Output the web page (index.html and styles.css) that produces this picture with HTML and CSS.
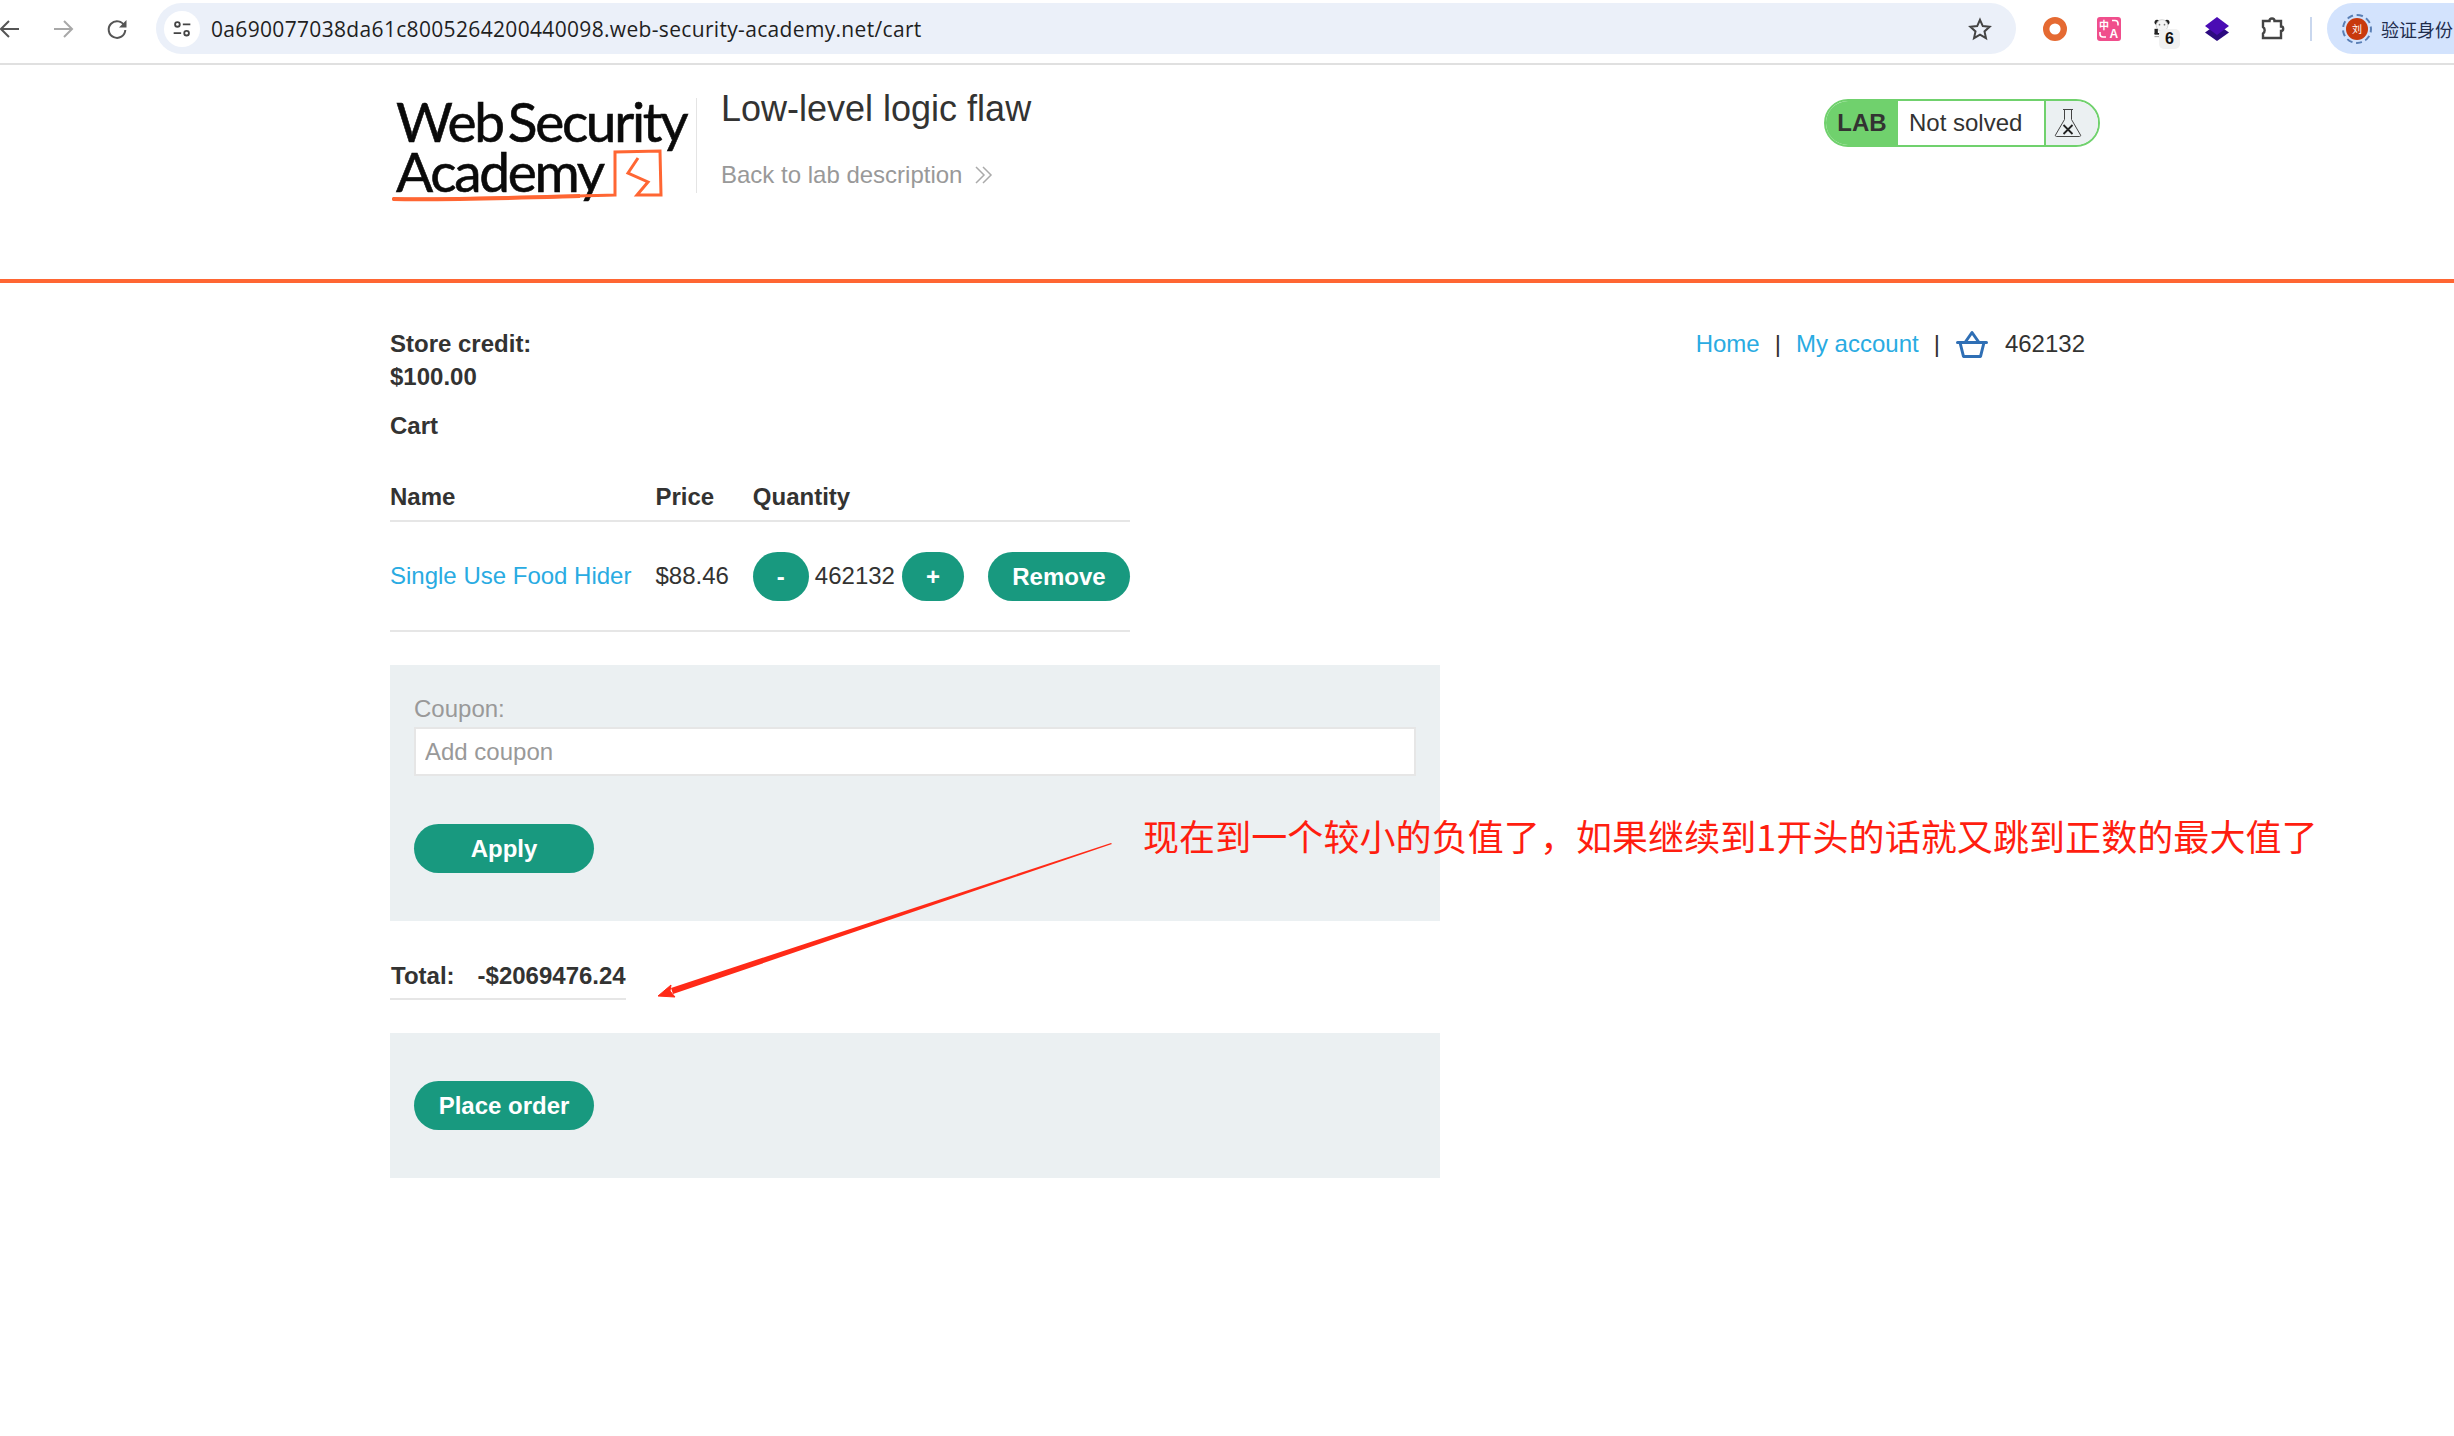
FILE: index.html
```html
<!DOCTYPE html>
<html lang="en">
<head>
<meta charset="utf-8">
<title>Low-level logic flaw</title>
<link rel="stylesheet" href="styles.css">
</head>
<body>
<div class="toolbar">
  <svg class="nav-icon back" viewBox="0 0 24 24"><path d="M21 12H4M11 4l-8 8 8 8"/></svg>
  <svg class="nav-icon fwd" viewBox="0 0 24 24"><path d="M3 12h17M13 4l8 8-8 8"/></svg>
  <svg class="nav-icon reload" viewBox="0 0 24 24"><path d="M19.5 9A8.300 8.300 0 1 0 20.300 13"/><path class="fill-dark" d="M21.500 3v7.500H14z"/></svg>
  <div class="omnibox">
    <span class="site-btn"><svg viewBox="0 0 24 24" class="tune"><circle cx="6.500" cy="6.500" r="2.800"/><path d="M13 6.500h9M2 17h9"/><circle cx="17.500" cy="17" r="2.800"/></svg></span>
    <span class="url">0a690077038da61c8005264200440098.web-security-academy.net/cart</span>
    <svg class="star" viewBox="0 0 24 24"><path d="M12 2.800l2.800 6.300 6.800.7-5.100 4.600 1.500 6.800-6-3.500-6 3.500 1.500-6.800L2.400 9.800l6.800-.7z"/></svg>
  </div>
  <div class="exts">
    <svg class="ext" viewBox="0 0 24 24"><circle cx="12" cy="12" r="8.800" fill="none" stroke="#e56a32" stroke-width="6.400"/></svg>
    <svg class="ext" viewBox="0 0 24 24"><rect width="24" height="24" rx="3" fill="#f04e8c"/><text x="2" y="12" class="tr-zh">中</text><text x="12.500" y="21" class="tr-en">A</text><path d="M15 3.500h3a3 3 0 0 1 3 3v2M3 15v2a3 3 0 0 0 3 3h3" fill="none" stroke="#fff" stroke-width="1.600"/></svg>
    <span class="ext panda">
      <svg viewBox="0 0 24 24"><circle cx="6" cy="5" r="3" fill="#222"/><circle cx="18" cy="5" r="3" fill="#222"/><circle cx="12" cy="9" r="7" fill="#f4f4f4" stroke="#ccc"/><circle cx="9" cy="8" r="1" fill="#777"/><circle cx="15" cy="8" r="1" fill="#777"/><rect x="3" y="13" width="4" height="6" fill="#222"/><rect x="3" y="18" width="9" height="2" fill="#222"/><rect x="3" y="21.500" width="9" height="1.500" fill="#aaa"/></svg>
      <span class="ext-badge">6</span>
    </span>
    <svg class="ext" viewBox="0 0 24 24"><path d="M12 24L24 15.500 12 7 0 15.500z" fill="#2c0a80"/><path d="M12 0L24 9 12 18 0 9z" fill="#4a0cb4"/></svg>
    <svg class="ext puzzle" viewBox="0 0 24 24"><path d="M2 5h6.500a2.500 2.500 0 0 1 5 0H20v5.500a2.200 2.200 0 0 1 0 4.400V22H2v-4.500a4 4 0 0 0 0-6.500z"/></svg>
  </div>
  <span class="tb-divider"></span>
  <div class="profile">
    <span class="avatar"><span class="avatar-in">刘</span></span>
    <span class="profile-text">验证身份</span>
  </div>
</div>

<header class="lab-header">
  <div class="container header-row">
    <div class="logo">
      <span class="logo-l1">Web<span class="logo-gap"></span>Security</span>
      <span class="logo-l2">Academy</span>
      <svg class="logo-mark" viewBox="0 0 306 128"><path d="M2 101C70 102 150 99 225 97V54L270 53 271 97H247L258 84 238 75 248 60" fill="none" stroke="#ff6633" stroke-width="3"/><path d="M3 101C60 102 120 100 190 98" fill="none" stroke="#ff6633" stroke-width="4"/></svg>
    </div>
    <div class="title-block">
      <h2 class="lab-title">Low-level logic flaw</h2>
      <a class="back-link">Back to lab description<svg class="chev" viewBox="0 0 20 20"><path d="M2 2l8 8-8 8M9 2l8 8-8 8"/></svg></a>
    </div>
    <div class="status">
      <span class="status-lab">LAB</span>
      <span class="status-text">Not solved</span>
      <span class="status-icon"><svg viewBox="0 0 28 30"><path d="M9 1.500h10M10.500 1.500v10L1.500 27a1 1 0 0 0 1 1.500h23a1 1 0 0 0 1-1.500L17.500 11.500v-10" fill="none" stroke="#444" stroke-width="1"/><path d="M9.500 17l9 9M18.500 17l-9 9" stroke="#222" stroke-width="1.800"/></svg></span>
    </div>
  </div>
</header>

<main class="container page">
  <div class="top-row">
    <div class="credit"><div>Store credit:</div><div>$100.00</div></div>
    <nav class="nav">
      <a class="link">Home</a><span class="sep">|</span><a class="link">My account</a><span class="sep">|</span>
      <svg class="cart" viewBox="0 0 32 28"><path d="M1.500 12.500h29M4 12.500l3.500 14h17l3.500-14M9 12.500l7-10 7 10" fill="none" stroke="#2f6fb5" stroke-width="3" stroke-linejoin="round" stroke-linecap="round"/></svg>
      <span class="cart-count">462132</span>
    </nav>
  </div>
  <div class="cart-title">Cart</div>
  <table class="cart-table">
    <thead><tr><th>Name</th><th>Price</th><th>Quantity</th></tr></thead>
    <tbody>
      <tr>
        <td><a class="link">Single Use Food Hider</a></td>
        <td>$88.46</td>
        <td class="qty-cell"><span class="qty"><button class="btn btn-min">-</button><span class="qty-num">462132</span><button class="btn btn-plus">+</button><button class="btn btn-rem">Remove</button></span></td>
      </tr>
    </tbody>
  </table>
  <section class="panel panel-coupon">
    <label class="coupon-label">Coupon:</label>
    <input class="coupon-input" placeholder="Add coupon">
    <button class="btn btn-wide">Apply</button>
  </section>
  <div class="total"><span>Total:</span><span>-$2069476.24</span></div>
  <section class="panel panel-order">
    <button class="btn btn-wide">Place order</button>
  </section>
</main>

<svg class="arrow" viewBox="0 0 470 170"><path d="M461 7L21 152 23 158 462 8Z" fill="#ff2a17"/><path d="M8 160L21 149 20 155 25 161z" fill="#ff2a17" stroke="#ff2a17"/></svg>
<div class="note">现在到一个较小的负值了，如果继续到1开头的话就又跳到正数的最大值了</div>
</body>
</html>
```
FILE: styles.css
```css
* { box-sizing: border-box; }
html, body { margin: 0; padding: 0; }
body { position: relative; width: 2454px; height: 1436px; overflow: hidden; background: #fff; color: #333332; font-family: "Liberation Sans", Arial, sans-serif; font-size: 24px; }

.toolbar { display: flex; align-items: center; height: 65px; padding-bottom: 6px; border-bottom: 2px solid #e0e0e0; background: #fff; overflow: hidden; }
.nav-icon { width: 24px; height: 24px; flex: none; fill: none; stroke-width: 2; }
.fill-dark { fill: #555; stroke: none; }
.back { margin-left: -2px; stroke: #555; }
.fwd { margin-left: 29px; stroke: #a8a8a8; }
.reload { margin-left: 30px; stroke: #555; }
.omnibox { display: flex; align-items: center; width: 1860px; height: 51px; margin-left: 27px; padding: 0 24px 0 8px; background: #ebf0f9; border-radius: 26px; flex: none; }
.site-btn { display: flex; align-items: center; justify-content: center; width: 36px; height: 36px; border-radius: 50%; background: #fff; flex: none; }
.tune { width: 20px; height: 20px; fill: none; stroke: #444; stroke-width: 2.200; }
.url { margin-left: 11px; font-family: "Open Sans", sans-serif; font-size: 21px; letter-spacing: .33px; color: #1f1f1f; white-space: nowrap; flex: 1; }
.star { width: 24px; height: 24px; fill: none; stroke: #444; stroke-width: 2; flex: none; }
.exts { display: flex; align-items: center; gap: 30px; margin-left: 27px; flex: none; }
.ext { display: block; width: 24px; height: 24px; flex: none; position: relative; }
.tr-zh { fill: #fff; font-family: "Noto Sans CJK SC", sans-serif; font-size: 10px; font-weight: 700; }
.tr-en { fill: #fff; font-family: "Liberation Sans", sans-serif; font-size: 12px; font-weight: 700; }
.panda svg { display: block; width: 20px; height: 22px; margin-left: 1px; }
.puzzle { fill: none; stroke: #444; stroke-width: 2.400; margin-left: 2px; margin-top: -2px; }
.ext-badge { position: absolute; left: 8px; top: 12px; width: 21px; height: 20px; background: #f1f1f1; border-radius: 5px; color: #111; font-size: 16px; font-weight: 700; text-align: center; line-height: 20px; }
.tb-divider { width: 2px; height: 24px; margin-left: 25px; background: #c9d7ee; flex: none; }
.profile { display: flex; align-items: center; gap: 9px; width: 140px; height: 51px; margin-left: 15px; padding-left: 15px; background: #d3e3fd; border-radius: 26px 0 0 26px; flex: none; }
.avatar { display: flex; align-items: center; justify-content: center; width: 30px; height: 30px; border: 2px dashed #5a7fb5; border-radius: 50%; flex: none; }
.avatar-in { width: 22px; height: 22px; background: #c8390d; border-radius: 50%; color: #fff; font-size: 10px; line-height: 22px; text-align: center; font-family: "Noto Sans CJK SC", sans-serif; }
.profile-text { font-family: "Noto Sans CJK SC", sans-serif; font-size: 18px; color: #1f2d4d; white-space: nowrap; }

.container { width: 1710px; margin-left: 390px; }
.lab-header { height: 218px; border-bottom: 4px solid #ff6633; }
.header-row { display: flex; align-items: flex-start; height: 100%; }
.logo { position: relative; width: 307px; height: 95px; margin-top: 33px; border-right: 1px solid #e4e4e4; color: #0a0a0a; font-family: "Lato", sans-serif; line-height: 50px; font-size: 55px; font-weight: 400; letter-spacing: -2.300px; -webkit-text-stroke: .6px #0a0a0a; flex: none; }
.logo-l1 { display: block; white-space: nowrap; margin: -2px 0 0 6px; }
.logo-l2 { display: block; white-space: nowrap; margin-left: 6px; }
.logo-gap { display: inline-block; width: 5px; }
.logo-mark { position: absolute; left: 0; top: 0; width: 306px; height: 128px; }
.title-block { margin-left: 24px; flex: 1; }
.lab-title { margin: 23px 0 0; font-size: 36px; font-weight: 400; line-height: 42px; color: #333332; }
.back-link { display: flex; align-items: center; margin-top: 30px; color: #999; font-size: 24px; line-height: 30px; }
.chev { width: 20px; height: 20px; margin-left: 12px; fill: none; stroke: #aaa; stroke-width: 1.500; }
.status { display: flex; width: 276px; height: 48px; margin-top: 34px; border: 2px solid #70d16d; border-radius: 24px; overflow: hidden; flex: none; }
.status-lab { width: 72px; background: #70d16d; font-weight: 700; font-size: 24px; line-height: 44px; text-align: center; color: #333332; }
.status-text { width: 146px; padding-left: 11px; line-height: 44px; }
.status-icon { flex: 1; display: flex; align-items: center; justify-content: center; padding-right: 8px; background: #ebf0f2; border-left: 2px solid #70d16d; }
.status-icon svg { width: 28px; height: 30px; }

.page { position: relative; }
.top-row { display: flex; justify-content: space-between; padding: 44px 15px 0 0; }
.credit { font-weight: 700; line-height: 33px; width: 400px; }
.nav { display: flex; align-items: center; height: 33px; white-space: nowrap; }
.link { color: #29abe2; }
.sep { margin: 0 15px; color: #333332; }
.cart { width: 32px; height: 28px; margin: 0 17px 0 1px; }
.cart-title { margin-top: 16px; font-weight: 700; line-height: 33px; }
.cart-table { border-collapse: collapse; margin-top: 23px; line-height: 30px; }
.cart-table th { padding: 17px 24px 8px 0; font-weight: 700; text-align: left; border-bottom: 2px solid #e6e6e6; }
.cart-table th:last-child { padding-right: 0; }
.cart-table td { height: 110px; padding: 0 24px 0 0; border-bottom: 2px solid #e6e6e6; }
.cart-table td:last-child { padding-right: 0; }
.qty { display: flex; align-items: center; }
.btn { display: inline-block; height: 49px; padding: 0; border: 0; border-radius: 25px; background: #18997f; color: #fff; font-family: inherit; font-size: 24px; font-weight: 700; line-height: 49px; text-align: center; }
.btn-min { width: 56px; }
.qty-num { margin: 0 7px 0 6px; }
.btn-plus { width: 62px; }
.btn-rem { width: 142px; margin-left: 24px; }
.btn-wide { display: block; width: 180px; }
.panel { width: 1050px; background: #ebf0f2; padding: 0 24px; }
.panel-coupon { height: 256px; margin-top: 33px; padding-top: 25px; }
.coupon-label { display: block; line-height: 37px; color: #999; }
.coupon-input { display: block; width: 1002px; height: 49px; margin-top: 0; padding: 0 9px; border: 2px solid #e6e6e6; background: #fff; font-family: inherit; font-size: 24px; }
.coupon-input::placeholder { color: #999; opacity: 1; }
.panel-coupon .btn-wide { margin-top: 48px; }
.total { display: flex; gap: 23px; width: 236px; height: 42px; margin-top: 37px; padding-left: 1px; font-weight: 700; line-height: 36px; border-bottom: 2px solid #e6e6e6; white-space: nowrap; }
.panel-order { height: 145px; margin-top: 33px; padding-top: 48px; }

.arrow { position: absolute; left: 650px; top: 836px; width: 470px; height: 170px; }
.note { position: absolute; left: 1143px; top: 811px; color: #ff1e10; font-family: "Noto Sans CJK SC", sans-serif; font-size: 36px; letter-spacing: .08px; line-height: 48px; white-space: nowrap; }
```
